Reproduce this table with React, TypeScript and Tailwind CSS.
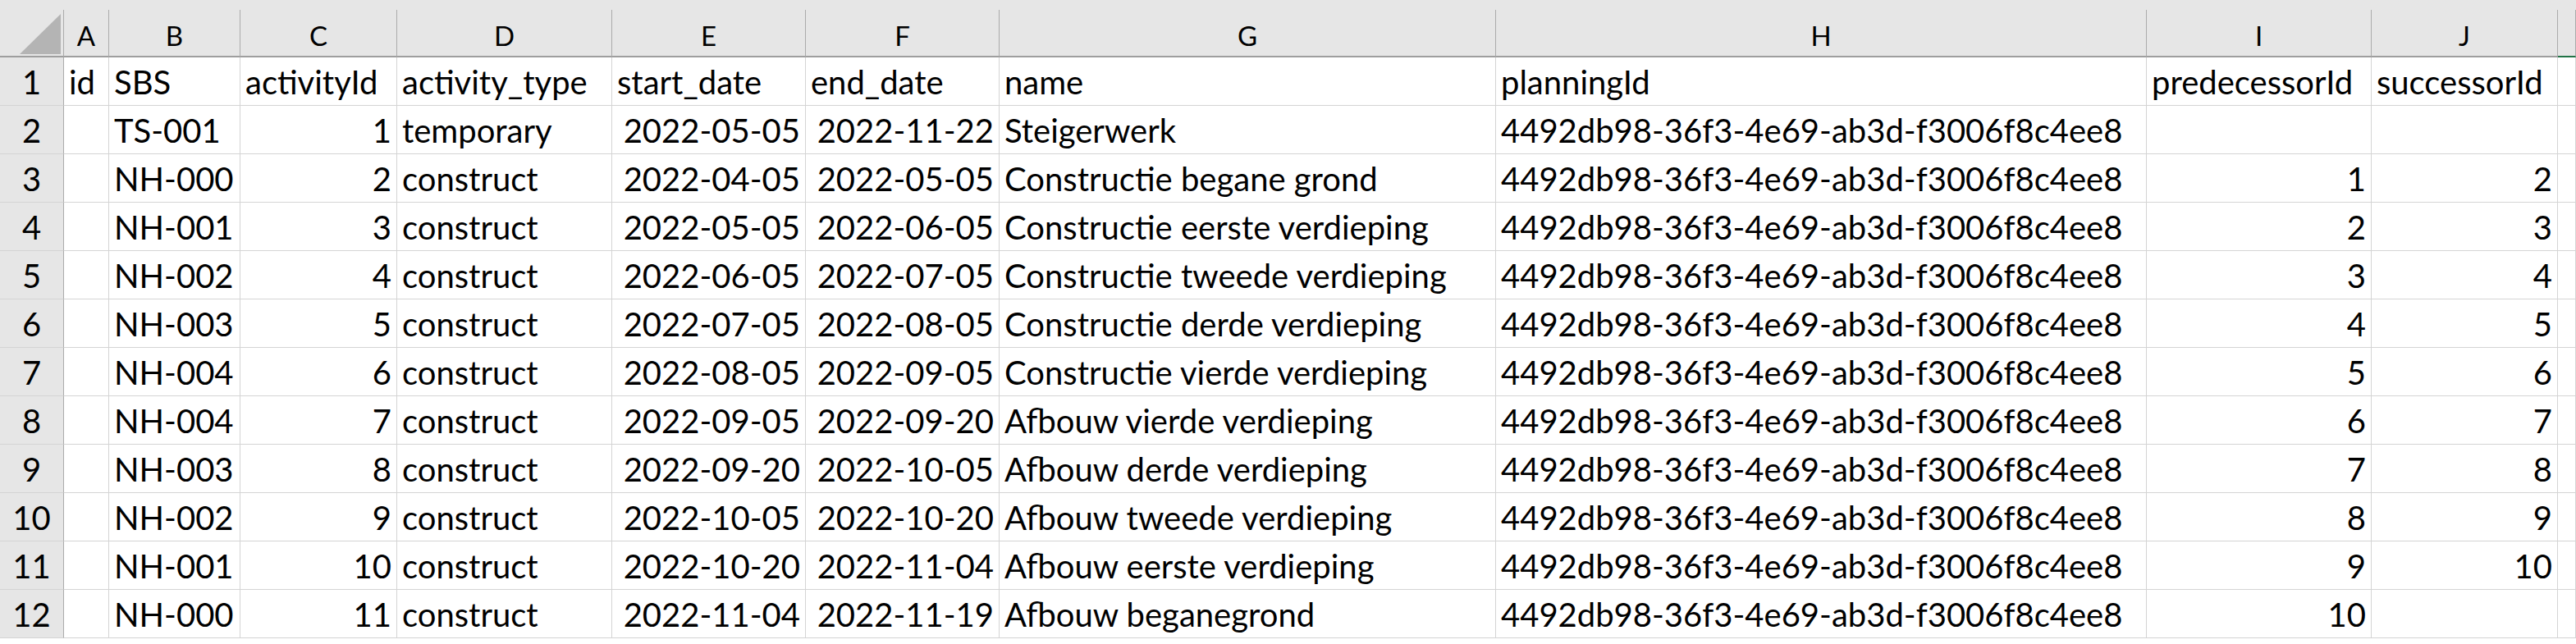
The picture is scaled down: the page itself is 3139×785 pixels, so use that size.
const COLS = ["A", "B", "C", "D", "E", "F", "G", "H", "I", "J", "K"];

const UUID = "4492db98-36f3-4e69-ab3d-f3006f8c4ee8";

type Row = {
  id: string;
  sbs: string;
  activityId: string;
  type: string;
  start: string;
  end: string;
  name: string;
  planning: string;
  pred: string;
  succ: string;
};

const rows: Row[] = [
  { id: "", sbs: "TS-001", activityId: "1", type: "temporary", start: "2022-05-05", end: "2022-11-22", name: "Steigerwerk", planning: UUID, pred: "", succ: "" },
  { id: "", sbs: "NH-000", activityId: "2", type: "construct", start: "2022-04-05", end: "2022-05-05", name: "Constructie begane grond", planning: UUID, pred: "1", succ: "2" },
  { id: "", sbs: "NH-001", activityId: "3", type: "construct", start: "2022-05-05", end: "2022-06-05", name: "Constructie eerste verdieping", planning: UUID, pred: "2", succ: "3" },
  { id: "", sbs: "NH-002", activityId: "4", type: "construct", start: "2022-06-05", end: "2022-07-05", name: "Constructie tweede verdieping", planning: UUID, pred: "3", succ: "4" },
  { id: "", sbs: "NH-003", activityId: "5", type: "construct", start: "2022-07-05", end: "2022-08-05", name: "Constructie derde verdieping", planning: UUID, pred: "4", succ: "5" },
  { id: "", sbs: "NH-004", activityId: "6", type: "construct", start: "2022-08-05", end: "2022-09-05", name: "Constructie vierde verdieping", planning: UUID, pred: "5", succ: "6" },
  { id: "", sbs: "NH-004", activityId: "7", type: "construct", start: "2022-09-05", end: "2022-09-20", name: "Afbouw vierde verdieping", planning: UUID, pred: "6", succ: "7" },
  { id: "", sbs: "NH-003", activityId: "8", type: "construct", start: "2022-09-20", end: "2022-10-05", name: "Afbouw derde verdieping", planning: UUID, pred: "7", succ: "8" },
  { id: "", sbs: "NH-002", activityId: "9", type: "construct", start: "2022-10-05", end: "2022-10-20", name: "Afbouw tweede verdieping", planning: UUID, pred: "8", succ: "9" },
  { id: "", sbs: "NH-001", activityId: "10", type: "construct", start: "2022-10-20", end: "2022-11-04", name: "Afbouw eerste verdieping", planning: UUID, pred: "9", succ: "10" },
  { id: "", sbs: "NH-000", activityId: "11", type: "construct", start: "2022-11-04", end: "2022-11-19", name: "Afbouw beganegrond", planning: UUID, pred: "10", succ: "" },
];

// column widths incl. the 1px right border, so the grid lines land where Excel draws them
const gridCols =
  "grid grid-cols-[78px_55px_160px_191px_262px_236px_236px_605px_793px_274px_227px_1fr]";

function Cell({ children, right }: { children?: React.ReactNode; right?: boolean }) {
  return (
    <div
      className={
        "h-[59px] border-r border-b border-[#d4d4d4] flex items-end pb-[8px] px-[6px] overflow-hidden whitespace-nowrap " +
        (right ? "justify-end" : "justify-start")
      }
    >
      <span className="leading-none">{children}</span>
    </div>
  );
}

function RowHeader({ n }: { n: number }) {
  return (
    <div className="h-[59px] bg-[#e6e6e6] border-r border-r-[#ababab] border-b border-b-[#d4d4d4] flex items-end justify-center pb-[8px]">
      <span className="leading-none">{n}</span>
    </div>
  );
}

export default function App() {
  const header: Row = {
    id: "id",
    sbs: "SBS",
    activityId: "activityId",
    type: "activity_type",
    start: "start_date",
    end: "end_date",
    name: "name",
    planning: "planningId",
    pred: "predecessorId",
    succ: "successorId",
  };

  return (
    <div className="w-[3139px] h-[785px] overflow-hidden bg-white text-black font-[Lato,'Liberation_Sans',sans-serif] text-[40px]">
      {/* column letters */}
      <div className="bg-[#e6e6e6] pt-[12px]">
        <div className={gridCols}>
          <div className="h-[58px] border-r border-r-[#ababab] border-b-2 border-b-[#9e9e9e] flex items-end justify-end pr-[3px] pb-[2px]">
            <svg width="50" height="49" viewBox="0 0 50 49">
              <polygon points="50,0 50,49 0,49" fill="#b4b4b4" />
            </svg>
          </div>
          {COLS.map((c) => (
            <div
              key={c}
              className={
                "h-[58px] border-r border-r-[#ababab] border-b-2 flex items-end justify-center pb-[8px] text-[33px] " +
                (c === "K" ? "border-b-[#217346]" : "border-b-[#9e9e9e]")
              }
            >
              <span className="leading-none">{c === "K" ? "" : c}</span>
            </div>
          ))}
        </div>
      </div>

      {/* data rows */}
      {[header, ...rows].map((r, i) => {
        const isHead = i === 0;
        return (
          <div key={i} className={gridCols}>
            <RowHeader n={i + 1} />
            <Cell>{r.id}</Cell>
            <Cell>{r.sbs}</Cell>
            <Cell right={!isHead}>{r.activityId}</Cell>
            <Cell>{r.type}</Cell>
            <Cell right={!isHead}>{r.start}</Cell>
            <Cell right={!isHead}>{r.end}</Cell>
            <Cell>{r.name}</Cell>
            <Cell>{r.planning}</Cell>
            <Cell right={!isHead}>{r.pred}</Cell>
            <Cell right={!isHead}>{r.succ}</Cell>
            <Cell />
          </div>
        );
      })}
    </div>
  );
}
